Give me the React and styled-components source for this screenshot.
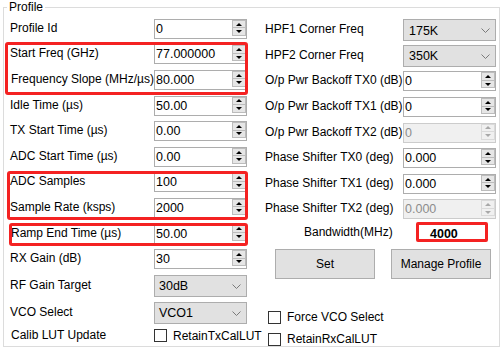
import React from "react";
import styled, { createGlobalStyle } from "styled-components";

const GlobalStyle = createGlobalStyle`
  html, body {
    margin: 0;
    padding: 0;
    background: #fff;
  }
  body {
    font-family: "Liberation Sans", Arial, sans-serif;
    font-size: 12px;
    color: #000;
  }
`;

const Frame = styled.fieldset`
  box-sizing: border-box;
  width: 497px;
  height: 347px;
  margin: 0 0 0 3px;
  padding: 0 0 0 6px;
  border: 1px solid #dcdcdc;
  min-inline-size: 0;
`;

const Legend = styled.legend`
  margin-left: -3px;
  padding: 0 2px;
  line-height: 14px;
  font-size: 12px;
`;

const Body = styled.div`
  display: flex;
  gap: 18px;
  padding-top: 2px;
`;

const Column = styled.div`
  display: flex;
  flex-direction: column;
  padding-top: ${({ $top }) => $top || 0}px;
`;

const Row = styled.div`
  display: grid;
  grid-template-columns: ${({ $label }) => $label}px 93px;
  align-items: center;
  height: ${({ $h }) => $h || 25.6}px;
`;

const Label = styled.span`
  white-space: nowrap;
  line-height: 14px;
  margin-top: -2px;
  padding-left: ${({ $indent }) => $indent || 0}px;
`;

const Mark = styled.div`
  position: relative;

  &::after {
    content: "";
    position: absolute;
    top: ${({ $t }) => $t}px;
    right: ${({ $r }) => $r}px;
    bottom: ${({ $b }) => $b}px;
    left: ${({ $l }) => $l}px;
    border: 3px solid #f42222;
    border-radius: 3px;
    pointer-events: none;
  }
`;

const Spin = styled.div`
  box-sizing: border-box;
  display: flex;
  width: 93px;
  height: 20px;
  border: 1px solid ${({ $off }) => ($off ? "#cccccc" : "#adadad")};
  background: ${({ $off }) => ($off ? "#f0f0f0" : "#fff")};
`;

const SpinValue = styled.span`
  flex: 1;
  padding-left: 1px;
  line-height: 18px;
  font-size: 12.5px;
  color: ${({ $off }) => ($off ? "#8c8c8c" : "#000")};
`;

const Arrows = styled.div`
  display: flex;
  flex-direction: column;
  width: 14px;
  padding-bottom: 2px;
`;

const ArrowBtn = styled.div`
  box-sizing: border-box;
  flex: 1;
  display: flex;
  align-items: center;
  justify-content: center;
  border: 1px solid ${({ $off }) => ($off ? "#dadada" : "#bcbcbc")};
  background: ${({ $off }) => ($off ? "#f0f0f0" : "#e6e6e6")};

  & + & {
    border-top: none;
  }

  &::before {
    content: "";
    border-left: 3px solid transparent;
    border-right: 3px solid transparent;
    ${({ $down, $off }) =>
      $down
        ? `border-top: 3px solid ${$off ? "#a8a8a8" : "#000"};`
        : `border-bottom: 3px solid ${$off ? "#a8a8a8" : "#000"};`}
  }
`;

const Combo = styled.div`
  box-sizing: border-box;
  display: flex;
  align-items: center;
  justify-content: space-between;
  width: 93px;
  height: 22px;
  padding: 1px 5px 0 ${({ $pad }) => $pad || 5}px;
  border: 1px solid #adadad;
  background: #e1e1e1;
  font-size: 12.5px;
`;

const CheckLabel = styled.span`
  display: flex;
  align-items: center;
  gap: 6px;
  white-space: nowrap;
  margin-left: ${({ $ml }) => $ml || 0}px;
  margin-top: ${({ $mt }) => $mt || 0}px;
`;

const Box = styled.span`
  box-sizing: border-box;
  flex-shrink: 0;
  width: 13px;
  height: 13px;
  border: 1px solid #333;
  background: #fff;
`;

const BandRow = styled.div`
  display: flex;
  align-items: center;
  height: 20px;
  padding-left: 39px;
`;

const BandLabel = styled.span`
  width: 112px;
  white-space: nowrap;
`;

const BandValue = styled.div`
  box-sizing: border-box;
  width: 72px;
  height: 20px;
  padding: 2px 0 0 11px;
  border: 3px solid #f42222;
  border-radius: 2px;
  font-weight: bold;
  font-size: 12.5px;
  line-height: 14px;
`;

const ButtonRow = styled.div`
  display: flex;
  gap: 16px;
  margin-top: 7px;
  padding-left: 10px;
`;

const Button = styled.button`
  box-sizing: border-box;
  width: 100px;
  height: 30px;
  padding: 0;
  border: 1px solid #adadad;
  background: #e1e1e1;
  font-family: "Liberation Sans", Arial, sans-serif;
  font-size: 12px;
  color: #000;
`;

const Chevron = () => (
  <svg width="9" height="5" viewBox="0 0 9 5">
    <polyline points="0.5,0.5 4.5,4.5 8.5,0.5" fill="none" stroke="#7a7a7a" strokeWidth="1" />
  </svg>
);

const SpinBox = ({ value, off }) => (
  <Spin $off={off}>
    <SpinValue $off={off}>{value}</SpinValue>
    <Arrows>
      <ArrowBtn $off={off} />
      <ArrowBtn $off={off} $down />
    </Arrows>
  </Spin>
);

const Check = ({ children, ml, mt }) => (
  <CheckLabel $ml={ml} $mt={mt}>
    <Box />
    {children}
  </CheckLabel>
);

const LeftRow = ({ label, value, indent, h }) => (
  <Row $label={144} $h={h}>
    <Label $indent={indent}>{label}</Label>
    <SpinBox value={value} />
  </Row>
);

const RightRow = ({ label, value, off }) => (
  <Row $label={138}>
    <Label>{label}</Label>
    <SpinBox value={value} off={off} />
  </Row>
);

export default function App() {
  return (
    <>
      <GlobalStyle />
      <Frame>
        <Legend>Profile</Legend>
        <Body>
          <Column>
            <LeftRow label="Profile Id" value="0" />
            <Mark $t={0} $r={-1} $b={-2} $l={-5}>
              <LeftRow label="Start Freq (GHz)" value="77.000000" />
              <LeftRow label="Frequency Slope (MHz/µs)" value="80.000" indent={1} />
            </Mark>
            <LeftRow label="Idle Time (µs)" value="50.00" />
            <LeftRow label="TX Start Time (µs)" value="0.00" />
            <LeftRow label="ADC Start Time (µs)" value="0.00" />
            <Mark $t={1} $r={-1} $b={1} $l={-3}>
              <LeftRow label="ADC Samples" value="100" />
              <LeftRow label="Sample Rate (ksps)" value="2000" />
            </Mark>
            <Mark $t={2} $r={-1} $b={0} $l={-1}>
              <LeftRow label="Ramp End Time (µs)" value="50.00" indent={1} />
            </Mark>
            <LeftRow label="RX Gain (dB)" value="30" />
            <Row $label={144} $h={28}>
              <Label>RF Gain Target</Label>
              <Combo $pad={4}>
                30dB
                <Chevron />
              </Combo>
            </Row>
            <Row $label={144} $h={26}>
              <Label>VCO Select</Label>
              <Combo $pad={4}>
                VCO1
                <Chevron />
              </Combo>
            </Row>
            <Row $label={144} $h={20}>
              <Label $indent={1}>Calib LUT Update</Label>
              <Check>RetainTxCalLUT</Check>
            </Row>
          </Column>

          <Column $top={1.5}>
            <Row $label={138}>
              <Label>HPF1 Corner Freq</Label>
              <Combo>
                175K
                <Chevron />
              </Combo>
            </Row>
            <Row $label={138}>
              <Label>HPF2 Corner Freq</Label>
              <Combo>
                350K
                <Chevron />
              </Combo>
            </Row>
            <RightRow label="O/p Pwr Backoff TX0 (dB)" value="0" />
            <RightRow label="O/p Pwr Backoff TX1 (dB)" value="0" />
            <RightRow label="O/p Pwr Backoff TX2 (dB)" value="0" off />
            <RightRow label="Phase Shifter TX0 (deg)" value="0.000" />
            <RightRow label="Phase Shifter TX1 (deg)" value="0.000" />
            <RightRow label="Phase Shifter TX2 (deg)" value="0.000" off />
            <BandRow>
              <BandLabel>Bandwidth(MHz)</BandLabel>
              <BandValue>4000</BandValue>
            </BandRow>
            <ButtonRow>
              <Button>Set</Button>
              <Button>Manage Profile</Button>
            </ButtonRow>
            <Check ml={3} mt={31}>Force VCO Select</Check>
            <Check ml={3} mt={8}>RetainRxCalLUT</Check>
          </Column>
        </Body>
      </Frame>
    </>
  );
}
